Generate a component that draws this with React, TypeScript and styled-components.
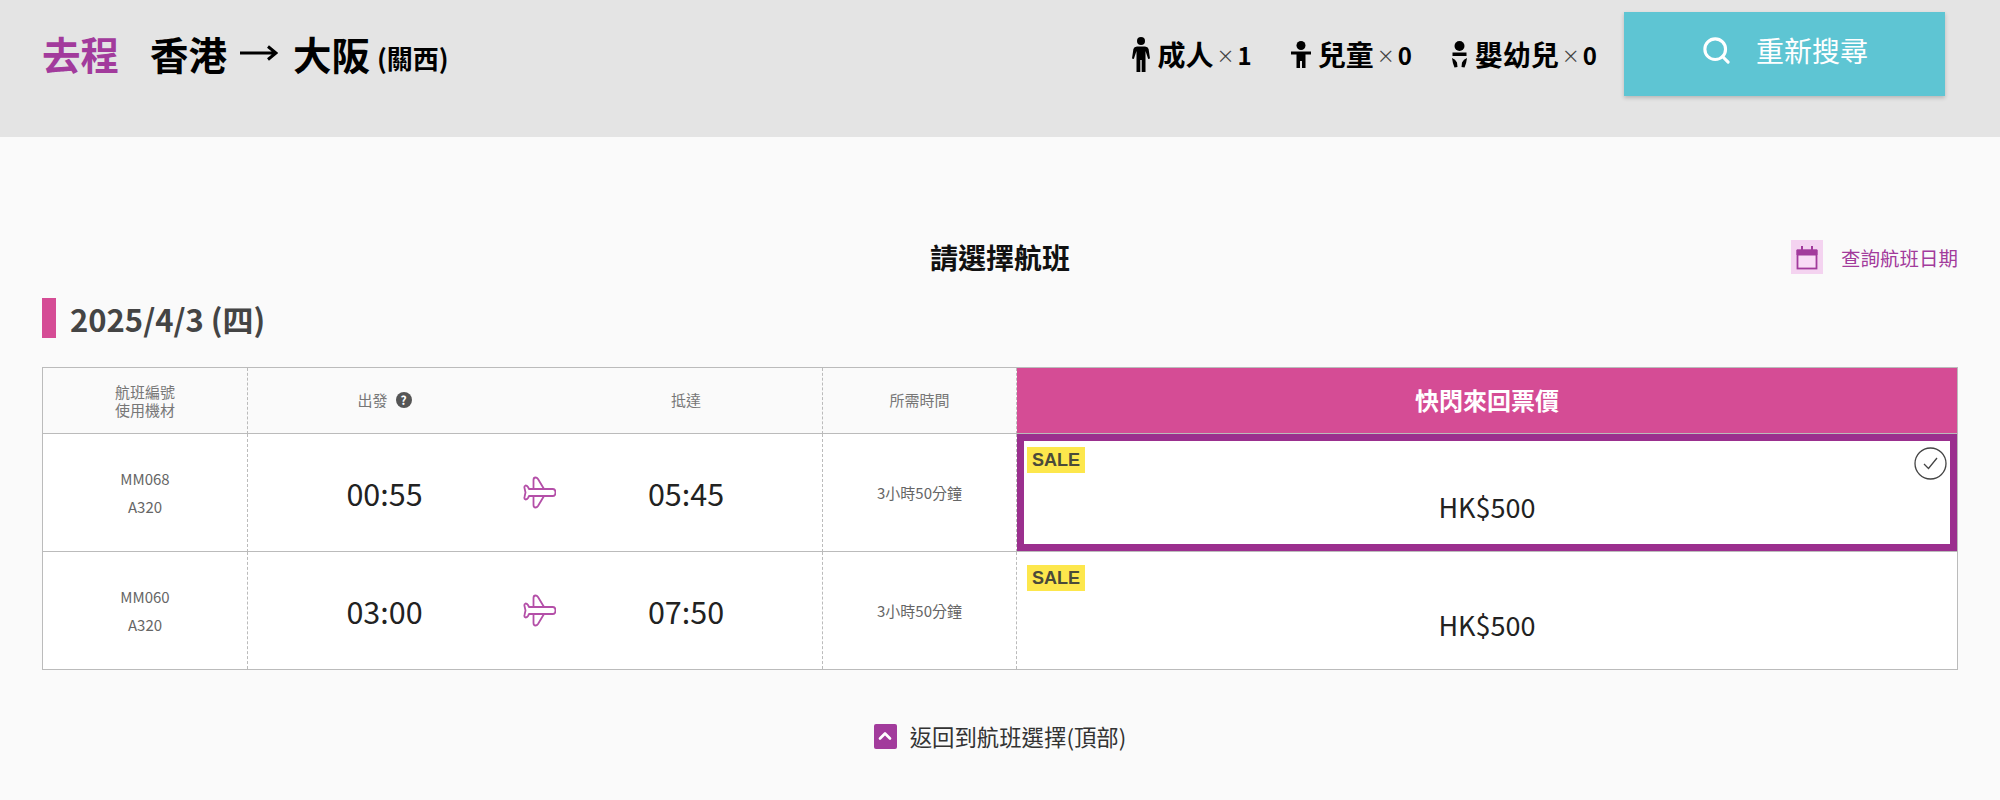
import React from "react";
import styled, { createGlobalStyle } from "styled-components";
import { Search, ChevronUp } from "lucide-react";

const GlobalStyle = createGlobalStyle`
  html, body {
    margin: 0;
    background: #fafafa;
    font-family: "Noto Sans CJK TC", "Noto Sans", sans-serif;
  }
`;

const TopBar = styled.header`
  height: 137px;
  background: #e4e4e4;
  display: flex;
  justify-content: space-between;
  align-items: flex-start;
  padding: 12px 55px 0 42px;
  box-sizing: border-box;
`;

const Route = styled.div`
  display: flex;
  align-items: center;
  height: 82px;
  color: #000;
  font-weight: 700;
  font-size: 38.5px;
`;

const Leg = styled.span`
  color: #a23b9c;
  margin-right: 31px;
`;

const RouteArrow = styled.svg`
  width: 38px;
  height: 16px;
  margin: 0 15px 0 13px;
`;

const Airport = styled.span`
  font-size: 26px;
  margin-left: 7px;
  margin-top: 8px;
`;

const TopRight = styled.div`
  display: flex;
  align-items: flex-start;
`;

const Passengers = styled.div`
  display: flex;
  align-items: center;
  height: 84px;
  gap: 39px;
  margin-right: 27px;
`;

const Passenger = styled.div`
  display: flex;
  align-items: center;
  font-size: 28px;
  font-weight: 700;
  color: #000;
`;

const PersonIcon = styled.svg`
  margin-right: 7px;
  display: block;
`;

const Times = styled.span`
  font-size: 18px;
  font-weight: 400;
  color: #444;
  margin: 2px 3px 0 3px;
`;

const Count = styled.span`
  font-size: 24px;
`;

const SearchButton = styled.button`
  width: 321px;
  height: 84px;
  border: none;
  background: #5ec5d3;
  color: #fff;
  font-family: inherit;
  font-size: 28px;
  font-weight: 400;
  display: flex;
  align-items: center;
  justify-content: center;
  gap: 24px;
  padding: 0 0 8px;
  box-shadow: 0 2px 4px rgba(0, 0, 0, 0.2);
`;

const Main = styled.main`
  padding: 100px 42px 0;
`;

const TitleRow = styled.div`
  display: grid;
  grid-template-columns: 1fr auto 1fr;
  align-items: center;
  height: 34px;
`;

const PageTitle = styled.h2`
  grid-column: 2;
  margin: 0;
  font-size: 28px;
  font-weight: 700;
  color: #111;
`;

const CalendarLink = styled.a`
  justify-self: end;
  display: flex;
  align-items: center;
  gap: 18px;
  font-size: 19.5px;
  color: #a23b9c;
`;

const CalendarBox = styled.span`
  width: 32px;
  height: 34px;
  background: #f4d3f0;
  display: flex;
  align-items: center;
  justify-content: center;
`;

const DateHeading = styled.h3`
  margin: 27px 0 29px;
  height: 40px;
  border-left: 14px solid #d54c95;
  padding-left: 14px;
  display: flex;
  align-items: center;
  font-size: 31px;
  font-weight: 700;
  color: #444;
`;

const Table = styled.div`
  display: grid;
  grid-template-columns: 205px 575px 194px 1fr;
  grid-template-rows: 66px 118px 117px;
  border: 1px solid #bbb;
  background: #fff;
`;

const Cell = styled.div<{ $head?: boolean; $last?: boolean }>`
  display: flex;
  align-items: center;
  justify-content: center;
  box-sizing: border-box;
  text-align: center;
  color: #666;
  font-size: 15px;
  background: ${(p) => (p.$head ? "#fafafa" : "#fff")};
  border-right: 1px dashed #bbb;
  border-bottom: ${(p) => (p.$last ? "none" : "1px solid #bbb")};
`;

const HeadStack = styled.div`
  line-height: 18px;
  color: #777;
`;

const FlightInfo = styled.div`
  line-height: 28px;
`;

const TimesGrid = styled.div`
  width: 100%;
  display: grid;
  grid-template-columns: 273px 2px 33px 260px;
  justify-content: start;
  align-items: center;
  justify-items: center;
`;

const HeadLabel = styled.div`
  display: flex;
  align-items: center;
  gap: 8px;
  color: #777;
  font-size: 15px;
  padding-bottom: 2px;
`;

const Help = styled.span`
  width: 16px;
  height: 16px;
  border-radius: 50%;
  background: #555;
  color: #fff;
  font-size: 12px;
  font-weight: 700;
  line-height: 16px;
  text-align: center;
`;

const Clock = styled.div`
  font-size: 30.5px;
  color: #222;
`;

const PriceHead = styled.div`
  background: #d54c95;
  color: #fff;
  font-size: 24px;
  font-weight: 700;
  display: flex;
  align-items: center;
  justify-content: center;
  box-sizing: border-box;
  border-bottom: 1px solid #bbb;
  padding-bottom: 3px;
`;

const PriceCell = styled.div<{ $selected?: boolean; $last?: boolean }>`
  position: relative;
  box-sizing: border-box;
  background: #fff;
  padding: 13px 10px 0;
  border-bottom: ${(p) => (p.$last ? "none" : "1px solid #bbb")};
  box-shadow: ${(p) => (p.$selected ? "inset 0 0 0 7px #9b2f8e" : "none")};
`;

const SaleBadge = styled.span`
  display: block;
  width: 58px;
  height: 26px;
  background: #fde74c;
  color: #4a4a3a;
  font-family: "Liberation Sans", Arial, sans-serif;
  font-size: 18px;
  font-weight: 700;
  line-height: 26px;
  text-align: center;
`;

const Price = styled.div`
  margin-top: 14px;
  font-size: 27px;
  line-height: 40px;
  color: #222;
  text-align: center;
`;

const CheckMark = styled.svg`
  position: absolute;
  top: 13px;
  right: 10px;
`;

const BackRow = styled.a`
  margin-top: 50px;
  display: flex;
  justify-content: center;
  align-items: center;
  gap: 13px;
  font-size: 22.4px;
  color: #333;
`;

const BackIcon = styled.span`
  width: 23px;
  height: 25px;
  background: #a23b9c;
  border-radius: 2px;
  display: flex;
  align-items: center;
  justify-content: center;
  color: #fff;
`;

const PlaneIcon = () => (
  <svg width="33" height="33" viewBox="0 0 33 33" fill="none" stroke="#b44fa8" strokeWidth="1.8" strokeLinejoin="round">
    <path d="M30 13H21L15 3Q14 1.5 12.5 1.5Q10.5 1.5 10.5 4V13H6L5 11Q4 9.5 2.5 9.5Q1 10 1.5 12L2.5 16.5L1.5 21Q1 23 2.5 23.5Q4 23.5 5 22L6 20H10.5V29Q10.5 31.5 12.5 31.5Q14 31.5 15 30L21 20H30Q32.5 20 32.5 16.5Q32.5 13 30 13Z" />
    <path d="M10.5 13H21M10.5 20H21" />
  </svg>
);

const flights = [
  { no: "MM068", dep: "00:55", arr: "05:45", selected: true },
  { no: "MM060", dep: "03:00", arr: "07:50", selected: false },
];

export default function App() {
  return (
    <>
      <GlobalStyle />
      <TopBar>
        <Route>
          <Leg>去程</Leg>
          香港
          <RouteArrow viewBox="0 0 38 16" fill="none" stroke="#000" strokeWidth="3">
            <path d="M0 8H35M28 1.5L36 8L28 14.5" />
          </RouteArrow>
          大阪
          <Airport>(關西)</Airport>
        </Route>
        <TopRight>
          <Passengers>
            <Passenger>
              <PersonIcon width="18" height="35" viewBox="0 0 18 35" fill="#000">
                <circle cx="9" cy="4" r="4" />
                <path d="M5 9.5H13Q16 9.5 16.6 12L18 21.5L16.2 22L13.5 14V35H9.7V23H8.3V35H4.5V14L1.8 22L0 21.5L1.4 12Q2 9.5 5 9.5Z" />
              </PersonIcon>
              成人<Times>×</Times><Count>1</Count>
            </Passenger>
            <Passenger>
              <PersonIcon width="20" height="27" viewBox="0 0 20 27" fill="#000">
                <circle cx="10" cy="4.5" r="4.5" />
                <path d="M0 10.5H20V13.5H14.5V27H11V20H9V27H5.5V13.5H0Z" />
              </PersonIcon>
              兒童<Times>×</Times><Count>0</Count>
            </Passenger>
            <Passenger>
              <PersonIcon width="17" height="27" viewBox="0 0 17 27" fill="#000">
                <circle cx="8.5" cy="5" r="5" />
                <path d="M1.5 11.5H15.5V15H1.5ZM1 17Q4.5 18 6 21.5L6.5 26L3.5 26.5Q1.5 22 1 17ZM16 17Q12.5 18 11 21.5L10.5 26L13.5 26.5Q15.5 22 16 17Z" />
              </PersonIcon>
              嬰幼兒<Times>×</Times><Count>0</Count>
            </Passenger>
          </Passengers>
          <SearchButton>
            <Search size={31} strokeWidth={2.4} />
            重新搜尋
          </SearchButton>
        </TopRight>
      </TopBar>
      <Main>
        <TitleRow>
          <PageTitle>請選擇航班</PageTitle>
          <CalendarLink>
            <CalendarBox>
              <svg width="22" height="25" viewBox="0 0 22 25" fill="#f9dcf6" stroke="#a23b9c">
                <rect x="1.5" y="5.5" width="19" height="18" strokeWidth="1.8" />
                <path d="M1 5H21V10H1Z" fill="#a23b9c" strokeWidth="1" />
                <path d="M6 1V6M16 1V6" strokeWidth="2" />
              </svg>
            </CalendarBox>
            查詢航班日期
          </CalendarLink>
        </TitleRow>
        <DateHeading>2025/4/3 (四)</DateHeading>
        <Table>
          <Cell $head>
            <HeadStack>
              航班編號
              <br />
              使用機材
            </HeadStack>
          </Cell>
          <Cell $head>
            <TimesGrid>
              <HeadLabel>
                出發<Help>?</Help>
              </HeadLabel>
              <span />
              <span />
              <HeadLabel>抵達</HeadLabel>
            </TimesGrid>
          </Cell>
          <Cell $head>
            <HeadLabel>所需時間</HeadLabel>
          </Cell>
          <PriceHead>快閃來回票價</PriceHead>
          {flights.map((f, i) => {
            const last = i === flights.length - 1;
            return (
              <React.Fragment key={f.no}>
                <Cell $last={last}>
                  <FlightInfo>
                    {f.no}
                    <br />
                    A320
                  </FlightInfo>
                </Cell>
                <Cell $last={last}>
                  <TimesGrid>
                    <Clock>{f.dep}</Clock>
                    <span />
                    <PlaneIcon />
                    <Clock>{f.arr}</Clock>
                  </TimesGrid>
                </Cell>
                <Cell $last={last}>3小時50分鐘</Cell>
                <PriceCell $selected={f.selected} $last={last}>
                  <SaleBadge>SALE</SaleBadge>
                  <Price>HK$500</Price>
                  {f.selected && (
                    <CheckMark width="33" height="33" viewBox="0 0 33 33" fill="none" stroke="#444" strokeWidth="1.3">
                      <circle cx="16.5" cy="16.5" r="15.5" />
                      <path d="M10 17L14.5 21.5L23 11" />
                    </CheckMark>
                  )}
                </PriceCell>
              </React.Fragment>
            );
          })}
        </Table>
        <BackRow>
          <BackIcon>
            <ChevronUp size={20} strokeWidth={3.2} />
          </BackIcon>
          返回到航班選擇(頂部)
        </BackRow>
      </Main>
    </>
  );
}
